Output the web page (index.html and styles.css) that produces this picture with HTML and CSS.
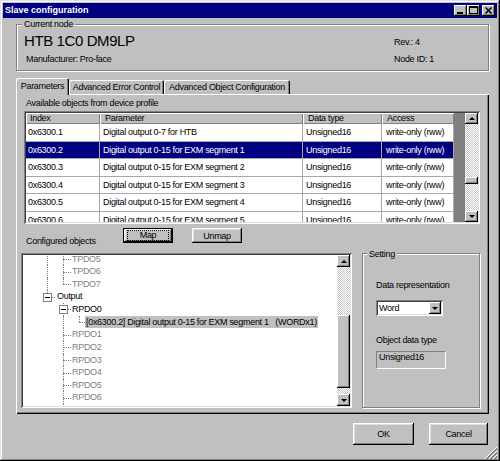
FILE: index.html
```html
<!DOCTYPE html>
<html>
<head>
<meta charset="utf-8">
<title>Slave configuration</title>
<link rel="stylesheet" href="styles.css">
</head>
<body>
<div class="window">
  <div class="titlebar">
    <span class="title">Slave configuration</span>
    <span class="tb-btn"><svg width="13" height="11" viewBox="0 0 13 11"><rect x="3" y="7" width="6" height="2" fill="#000"/></svg></span>
    <span class="tb-btn"><svg width="13" height="11" viewBox="0 0 13 11" shape-rendering="crispEdges"><rect x="2.5" y="1.5" width="8" height="7" fill="none" stroke="#000"/><rect x="2" y="1" width="9" height="2" fill="#000"/></svg></span>
    <span class="tb-btn close"><svg width="13" height="11" viewBox="0 0 13 11"><path d="M3.5 2.5 L9.5 8.5 M9.5 2.5 L3.5 8.5" stroke="#000" stroke-width="1.6" fill="none"/></svg></span>
  </div>

  <div class="content">
    <div class="group node">
      <span class="group-label">Current node</span>
      <div class="node-left">
        <div class="node-name">HTB 1C0 DM9LP</div>
        <div class="node-manu">Manufacturer: Pro-face</div>
      </div>
      <div class="node-right">
        <div>Rev.: 4</div>
        <div class="node-id">Node ID: 1</div>
      </div>
    </div>

    <div class="tabs">
      <div class="tab active">Parameters</div>
      <div class="tab t2">Advanced Error Control</div>
      <div class="tab t3">Advanced Object Configuration</div>
    </div>

    <div class="panel">
      <div class="caption">Available objects from device profile</div>
      <div class="listview">
        <div class="lv-main">
          <div class="lv-head">
            <div class="hcell w1">Index</div>
            <div class="hcell w2">Parameter</div>
            <div class="hcell w3">Data type</div>
            <div class="hcell w4">Access</div>
          </div>
          <div class="lv-row">
            <div class="cell w1">0x6300.1</div>
            <div class="cell w2">Digital output 0-7 for HTB</div>
            <div class="cell w3">Unsigned16</div>
            <div class="cell w4">write-only (rww)</div>
          </div>
          <div class="lv-row selected">
            <div class="cell w1">0x6300.2</div>
            <div class="cell w2">Digital output 0-15 for EXM segment 1</div>
            <div class="cell w3">Unsigned16</div>
            <div class="cell w4">write-only (rww)</div>
          </div>
          <div class="lv-row">
            <div class="cell w1">0x6300.3</div>
            <div class="cell w2">Digital output 0-15 for EXM segment 2</div>
            <div class="cell w3">Unsigned16</div>
            <div class="cell w4">write-only (rww)</div>
          </div>
          <div class="lv-row">
            <div class="cell w1">0x6300.4</div>
            <div class="cell w2">Digital output 0-15 for EXM segment 3</div>
            <div class="cell w3">Unsigned16</div>
            <div class="cell w4">write-only (rww)</div>
          </div>
          <div class="lv-row">
            <div class="cell w1">0x6300.5</div>
            <div class="cell w2">Digital output 0-15 for EXM segment 4</div>
            <div class="cell w3">Unsigned16</div>
            <div class="cell w4">write-only (rww)</div>
          </div>
          <div class="lv-row">
            <div class="cell w1">0x6300.6</div>
            <div class="cell w2">Digital output 0-15 for EXM segment 5</div>
            <div class="cell w3">Unsigned16</div>
            <div class="cell w4">write-only (rww)</div>
          </div>
        </div>
        <div class="lv-filler"></div>
        <div class="vscroll">
          <div class="sb-btn"><svg width="6" height="3" viewBox="0 0 6 3"><polygon points="0,3 3,0 6,3" fill="#000"/></svg></div>
          <div class="sb-track lv-t1"></div>
          <div class="sb-thumb lv-thumb"></div>
          <div class="sb-track grow"></div>
          <div class="sb-btn"><svg width="6" height="3" viewBox="0 0 6 3"><polygon points="0,0 6,0 3,3" fill="#000"/></svg></div>
        </div>
      </div>

      <div class="map-row">
        <span class="map-label">Configured objects</span>
        <button class="btn small default"><span class="focus">Map</span></button>
        <button class="btn small unmap"><span class="lbl">Unmap</span></button>
      </div>

      <div class="lower">
        <div class="tree">
          <div class="tree-items">
            <div class="trow gray"><span class="ind v"></span><span class="ind tee"></span><span class="tl">TPDO5</span></div>
            <div class="trow gray"><span class="ind v"></span><span class="ind tee"></span><span class="tl">TPDO6</span></div>
            <div class="trow gray"><span class="ind v"></span><span class="ind ell"></span><span class="tl">TPDO7</span></div>
            <div class="trow"><span class="ind ell"><i class="box"></i></span><span class="tl lvl0">Output</span></div>
            <div class="trow"><span class="ind"></span><span class="ind tee"><i class="box"></i></span><span class="tl">RPDO0</span></div>
            <div class="trow"><span class="ind"></span><span class="ind v"></span><span class="ind ell"></span><span class="tl sel">[0x6300.2] Digital output 0-15 for EXM segment 1   (WORDx1)</span></div>
            <div class="trow gray"><span class="ind"></span><span class="ind tee"></span><span class="tl">RPDO1</span></div>
            <div class="trow gray"><span class="ind"></span><span class="ind tee"></span><span class="tl">RPDO2</span></div>
            <div class="trow gray"><span class="ind"></span><span class="ind tee"></span><span class="tl">RPDO3</span></div>
            <div class="trow gray"><span class="ind"></span><span class="ind tee"></span><span class="tl">RPDO4</span></div>
            <div class="trow gray"><span class="ind"></span><span class="ind tee"></span><span class="tl">RPDO5</span></div>
            <div class="trow gray"><span class="ind"></span><span class="ind tee"></span><span class="tl">RPDO6</span></div>
            <div class="trow gray"><span class="ind"></span><span class="ind v"></span></div>
          </div>
          <div class="vscroll tree-sb">
            <div class="sb-btn tall"><svg width="6" height="3" viewBox="0 0 6 3"><polygon points="0,3 3,0 6,3" fill="#000"/></svg></div>
            <div class="sb-track tr-t1"></div>
            <div class="sb-thumb tr-thumb"></div>
            <div class="sb-track grow"></div>
            <div class="sb-btn tall"><svg width="6" height="3" viewBox="0 0 6 3"><polygon points="0,0 6,0 3,3" fill="#000"/></svg></div>
          </div>
        </div>

        <div class="group setting">
          <span class="group-label set-lbl">Setting</span>
          <div class="set-text">Data representation</div>
          <div class="combo">
            <span class="combo-val">Word</span>
            <span class="combo-btn"><svg width="6" height="3" viewBox="0 0 6 3"><polygon points="0,0 6,0 3,3" fill="#000"/></svg></span>
          </div>
          <div class="set-text odt">Object data type</div>
          <div class="ro-field">Unsigned16</div>
        </div>
      </div>
    </div>

    <div class="footer">
      <button class="btn big ok">OK</button>
      <button class="btn big cancel">Cancel</button>
    </div>
  </div>

  <svg class="grip" width="12" height="12" viewBox="0 0 12 12" shape-rendering="crispEdges">
    <path d="M12 0 L0 12" stroke="#fff"/>
    <path d="M12 1 L1 12 M12 2 L2 12" stroke="#808080"/>
    <path d="M12 4 L4 12" stroke="#fff"/>
    <path d="M12 5 L5 12 M12 6 L6 12" stroke="#808080"/>
    <path d="M12 8 L8 12" stroke="#fff"/>
    <path d="M12 9 L9 12 M12 10 L10 12" stroke="#808080"/>
  </svg>
</div>
</body>
</html>
```

FILE: styles.css
```css
* { box-sizing: border-box; }
html, body { margin: 0; padding: 0; }
body {
  width: 500px; height: 461px; overflow: hidden;
  font-family: "Liberation Sans", Arial, sans-serif;
  font-size: 9px; letter-spacing: -0.3px; color: #000;
  background: #c0c0c0;
}

/* window frame */
.window {
  position: relative; width: 500px; height: 461px; padding: 3px;
  background: #c0c0c0;
  box-shadow: inset -1px -1px #000, inset 1px 1px #dfdfdf, inset -2px -2px #808080, inset 2px 2px #fff;
}
.titlebar {
  height: 15px; background: #000080; display: flex; align-items: center;
  padding: 0 2px;
}
.title { flex: 1; color: #fff; font-weight: bold; font-size: 9px; letter-spacing: 0; line-height: 15px; }
.tb-btn {
  width: 13px; height: 11px; display: flex; background: #c0c0c0;
  box-shadow: inset -1px -1px #000, inset 1px 1px #fff, inset -2px -2px #808080;
}
.tb-btn.close { margin-left: 2px; }

.content { padding: 6px 8px 0 13px; }

/* etched group box */
.group {
  position: relative; border: 1px solid #808080;
  box-shadow: inset 1px 1px #fff, 1px 1px #fff;
}
.group-label {
  position: absolute; top: -7px; left: 5px; padding: 0 2px;
  background: #c0c0c0; line-height: 12px; white-space: nowrap;
}

.node { height: 47px; display: flex; }
.node-left { flex: 1; padding: 7px 0 0 7px; }
.node-name { font-size: 15px; letter-spacing: -0.4px; line-height: 17px; }
.node-manu { margin: 4px 0 0 2px; line-height: 12px; }
.node-right { width: 94px; padding-top: 11px; line-height: 12px; }
.node-id { margin-top: 5px; }

/* tabs */
.tabs {
  position: relative; z-index: 1; margin-top: 7px; height: 16px;
  display: flex; align-items: flex-end;
}
.tab {
  height: 14px; line-height: 14px; text-align: center; white-space: nowrap;
  background: #c0c0c0; border-radius: 2px 2px 0 0;
  box-shadow: inset 1px 1px #fff, inset -1px 0 #000, inset -2px 0 #808080;
}
.tab.active { height: 17px; line-height: 16px; margin-bottom: -1px; width: 53px; }
.tab.t2 { width: 95px; }
.tab.t3 { width: 126px; }

.panel {
  height: 320px; padding: 3px 8px 0 8px;
  box-shadow: inset 1px 1px #fff, inset -1px -1px #000, inset -2px -2px #808080;
}
.caption { margin-left: 2px; line-height: 12px; white-space: nowrap; }

/* list view */
.listview {
  margin-top: 2px; width: 456px; height: 113px; padding: 2px; display: flex;
  box-shadow: inset 1px 1px #808080, inset -1px -1px #fff, inset 2px 2px #404040, inset -2px -2px #dfdfdf;
}
.lv-main { width: 428px; height: 109px; overflow: hidden; background: #fff; display: flex; flex-direction: column; }
.lv-head { display: flex; flex: none; height: 11px; background: #c0c0c0; }
.hcell {
  line-height: 11px; padding-left: 5px; white-space: nowrap; overflow: hidden;
  box-shadow: inset 1px 1px #fff, inset -1px -1px #808080;
}
.hcell.w1 { padding-left: 4px; }
.w1 { width: 74px; }
.w2 { width: 203px; }
.w3 { width: 79px; }
.w4 { width: 72px; }
.lv-row { display: flex; flex: none; height: 17.5px; border-bottom: 1px solid #a8a8a8; }
.cell {
  padding-left: 3px; line-height: 16.5px; white-space: nowrap; overflow: hidden;
  border-right: 1px solid #a8a8a8;
}
.cell.w1 { padding-left: 2px; }
.cell.w4 { padding-left: 4px; }
.lv-row.selected { background: #000080; color: #fff; }
.lv-filler { width: 11px; background: #808080; }

/* scrollbars */
.vscroll { width: 13px; display: flex; flex-direction: column; }
.sb-btn {
  flex: none; height: 11px; display: flex; align-items: center; justify-content: center;
  background: #c0c0c0;
  box-shadow: inset -1px -1px #000, inset 1px 1px #fff, inset -2px -2px #808080;
}
.sb-btn.tall { height: 12px; }
.sb-track { flex: none; background: repeating-conic-gradient(#fff 0 25%, #c8c8c8 0 50%) 0 0 / 2px 2px; }
.sb-track.grow { flex: 1; }
.sb-thumb {
  flex: none; background: #c0c0c0;
  box-shadow: inset -1px -1px #000, inset 1px 1px #fff, inset -2px -2px #808080;
}
.lv-t1 { height: 53px; }
.lv-thumb { height: 7px; }
.tr-t1 { height: 48px; }
.tr-thumb { height: 73px; }

/* buttons */
.btn {
  font: inherit; letter-spacing: inherit; color: #000; padding: 0; margin: 0;
  border: 0; background: #c0c0c0; display: flex; align-items: center; justify-content: center;
  box-shadow: inset -1px -1px #000, inset 1px 1px #fff, inset -2px -2px #808080, inset 2px 2px #dfdfdf;
}
.btn.small { width: 50px; height: 15px; }
.btn.default { border: 1px solid #000; align-items: stretch; justify-content: stretch; }
.focus {
  flex: 1; margin: 1px 3px 1px; border: 1px dotted #000;
  display: flex; align-items: center; justify-content: center; line-height: 9px;
}
.lbl { line-height: 12px; }

.map-row { display: flex; align-items: flex-start; margin-top: 4px; height: 15px; }
.map-label { width: 97px; margin-left: 2px; align-self: flex-end; margin-bottom: -4px; line-height: 12px; white-space: nowrap; }
.unmap { margin-left: 19px; }

/* lower area */
.lower { display: flex; margin-top: 10px; height: 155px; }
.tree {
  width: 331px; height: 155px; margin-left: -3px; padding: 2px; display: flex; background: #fff;
  box-shadow: inset 1px 1px #808080, inset -1px -1px #fff, inset 2px 2px #404040, inset -2px -2px #dfdfdf;
}
.tree-items { flex: 1; overflow: hidden; background: #fff; }
.trow {
  display: flex; height: 12.64px; line-height: 12.64px; white-space: pre;
}
.tree-items .trow:first-child { margin-top: -2.4px; }
.trow.gray { color: #808080; }
.ind { position: relative; flex: none; width: 16px; }
.trow .ind:first-child { margin-left: 16px; }
.ind.v::before, .ind.tee::before, .ind.ell::before {
  content: ""; position: absolute; left: 8px; top: 0; bottom: 0;
  border-left: 1px dotted #808080;
}
.ind.ell::before { bottom: 50%; }
.ind.tee::after, .ind.ell::after {
  content: ""; position: absolute; left: 8px; width: 8px; top: 50%;
  border-top: 1px dotted #808080;
}
.box {
  position: absolute; z-index: 1; left: 4px; top: calc(50% - 4px); width: 9px; height: 9px;
  border: 1px solid #808080; background: #fff;
}
.box::after {
  content: ""; position: absolute; left: 1px; top: 3px; width: 5px; height: 1px; background: #000;
}
.tl { padding-left: 1px; }
.tl.lvl0 { padding-left: 2px; }
.tl.sel { margin-left: -2px; padding: 0 1px; background: #c0c0c0; }

.tree-sb { width: 13px; }

/* setting group */
.setting { width: 118px; height: 155px; margin-left: 10px; padding: 25px 0 0 13px; }
.set-lbl { top: -6px; left: 4px; }
.set-text { line-height: 12px; white-space: nowrap; }
.set-text.odt { margin-top: 18px; }
.combo {
  margin-top: 9px; width: 67px; height: 16px; padding: 2px; display: flex; background: #fff;
  box-shadow: inset 1px 1px #808080, inset -1px -1px #fff, inset 2px 2px #404040, inset -2px -2px #dfdfdf;
}
.combo-val { flex: 1; padding-left: 1px; line-height: 12px; }
.combo-btn {
  width: 12px; height: 12px; display: flex; align-items: center; justify-content: center;
  background: #c0c0c0;
  box-shadow: inset -1px -1px #000, inset 1px 1px #fff, inset -2px -2px #808080;
}
.ro-field {
  margin-top: 5px; width: 70px; height: 18px; padding: 0 2px;
  border: 1px solid; border-color: #808080 #fff #fff #808080;
  line-height: 10px;
}

/* footer */
.footer { display: flex; justify-content: flex-end; padding-top: 9px; padding-right: 1px; }
.btn.big { height: 22px; }
.ok { width: 61px; }
.cancel { width: 59px; margin-left: 15px; }

.grip { position: absolute; right: 3px; bottom: 2px; }
```
